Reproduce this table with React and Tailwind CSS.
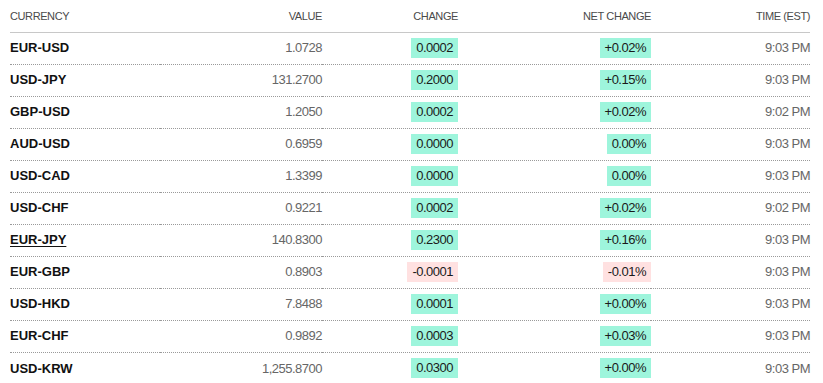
import React from 'react';

// Currency quotes table
const rows = [
  { pair: 'EUR-USD', value: '1.0728', change: '0.0002', net: '+0.02%', time: '9:03 PM' },
  { pair: 'USD-JPY', value: '131.2700', change: '0.2000', net: '+0.15%', time: '9:03 PM' },
  { pair: 'GBP-USD', value: '1.2050', change: '0.0002', net: '+0.02%', time: '9:02 PM' },
  { pair: 'AUD-USD', value: '0.6959', change: '0.0000', net: '0.00%', time: '9:03 PM' },
  { pair: 'USD-CAD', value: '1.3399', change: '0.0000', net: '0.00%', time: '9:03 PM' },
  { pair: 'USD-CHF', value: '0.9221', change: '0.0002', net: '+0.02%', time: '9:02 PM' },
  { pair: 'EUR-JPY', value: '140.8300', change: '0.2300', net: '+0.16%', time: '9:03 PM', link: true },
  { pair: 'EUR-GBP', value: '0.8903', change: '-0.0001', net: '-0.01%', time: '9:03 PM', down: true },
  { pair: 'USD-HKD', value: '7.8488', change: '0.0001', net: '+0.00%', time: '9:03 PM' },
  { pair: 'EUR-CHF', value: '0.9892', change: '0.0003', net: '+0.03%', time: '9:03 PM' },
  { pair: 'USD-KRW', value: '1,255.8700', change: '0.0300', net: '+0.00%', time: '9:03 PM' },
];

const Badge = ({ children, down }) => (
  <span
    className={`inline-block h-5 leading-5 px-[5px] ${down ? 'bg-[#ffe1e1]' : 'bg-[#9ef5dc]'} text-[#1a1a1a]`}
  >
    {children}
  </span>
);

export default function App() {
  return (
    <div className="bg-white w-[823px] h-[383px] overflow-hidden px-[10px] font-['Liberation_Sans',Arial,sans-serif]">
      <table className="w-[800px] table-fixed border-collapse">
        <colgroup>
          <col className="w-[150px]" />
          <col className="w-[162px]" />
          <col className="w-[136px]" />
          <col className="w-[193px]" />
          <col className="w-[159px]" />
        </colgroup>
        <thead>
          <tr className="h-[32px] border-b border-[#c8c8c8] text-[11px] text-[#4a4a4a] uppercase tracking-[-0.4px]">
            <th className="text-left font-normal p-0">Currency</th>
            <th className="text-right font-normal p-0">Value</th>
            <th className="text-right font-normal p-0">Change</th>
            <th className="text-right font-normal p-0">Net Change</th>
            <th className="text-right font-normal p-0">Time (EST)</th>
          </tr>
        </thead>
        <tbody>
          {rows.map((r, i) => (
            <tr
              key={r.pair}
              className={`h-[32px] text-[13px] tracking-[-0.5px] ${i < rows.length - 1 ? 'border-b border-dotted border-[#9a9a9a]' : ''}`}
            >
              <td className="p-0 text-left font-bold text-[#111] tracking-normal">
                <span className={r.link ? 'underline underline-offset-2' : ''}>{r.pair}</span>
              </td>
              <td className="p-0 text-right text-[#666]">{r.value}</td>
              <td className="p-0 text-right">
                <Badge down={r.down}>{r.change}</Badge>
              </td>
              <td className="p-0 text-right">
                <Badge down={r.down}>{r.net}</Badge>
              </td>
              <td className="p-0 text-right text-[#666]">{r.time}</td>
            </tr>
          ))}
        </tbody>
      </table>
    </div>
  );
}
